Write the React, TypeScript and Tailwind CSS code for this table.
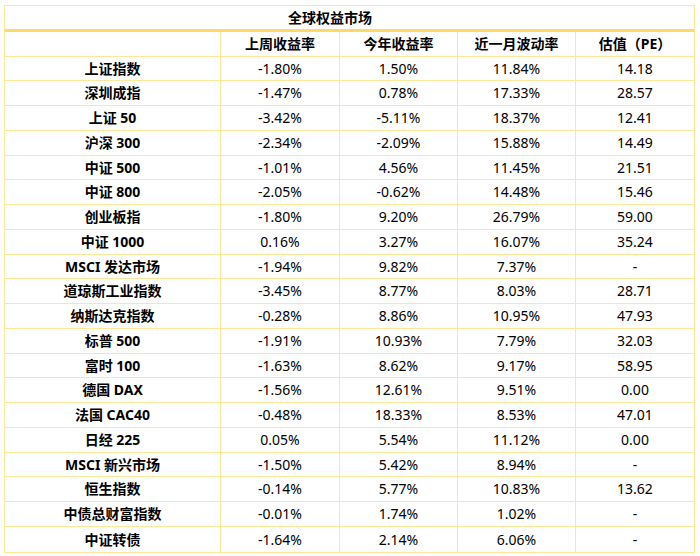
const headers = ["上周收益率", "今年收益率", "近一月波动率", "估值（PE）"];

const rows: [string, string, string, string, string][] = [
  ["上证指数", "-1.80%", "1.50%", "11.84%", "14.18"],
  ["深圳成指", "-1.47%", "0.78%", "17.33%", "28.57"],
  ["上证 50", "-3.42%", "-5.11%", "18.37%", "12.41"],
  ["沪深 300", "-2.34%", "-2.09%", "15.88%", "14.49"],
  ["中证 500", "-1.01%", "4.56%", "11.45%", "21.51"],
  ["中证 800", "-2.05%", "-0.62%", "14.48%", "15.46"],
  ["创业板指", "-1.80%", "9.20%", "26.79%", "59.00"],
  ["中证 1000", "0.16%", "3.27%", "16.07%", "35.24"],
  ["MSCI 发达市场", "-1.94%", "9.82%", "7.37%", "-"],
  ["道琼斯工业指数", "-3.45%", "8.77%", "8.03%", "28.71"],
  ["纳斯达克指数", "-0.28%", "8.86%", "10.95%", "47.93"],
  ["标普 500", "-1.91%", "10.93%", "7.79%", "32.03"],
  ["富时 100", "-1.63%", "8.62%", "9.17%", "58.95"],
  ["德国 DAX", "-1.56%", "12.61%", "9.51%", "0.00"],
  ["法国 CAC40", "-0.48%", "18.33%", "8.53%", "47.01"],
  ["日经 225", "0.05%", "5.54%", "11.12%", "0.00"],
  ["MSCI 新兴市场", "-1.50%", "5.42%", "8.94%", "-"],
  ["恒生指数", "-0.14%", "5.77%", "10.83%", "13.62"],
  ["中债总财富指数", "-0.01%", "1.74%", "1.02%", "-"],
  ["中证转债", "-1.64%", "2.14%", "6.06%", "-"],
];

const colWidths = ["w-[216px]", "w-[119px]", "w-[118px]", "w-[118px]", "w-[118px]"];

function Cell({ i, children, bold }: { i: number; children: React.ReactNode; bold?: boolean }) {
  return (
    <div
      className={`${colWidths[i]} shrink-0 flex items-center justify-center ${i < 4 ? "border-r border-[#FFE699]" : ""} ${bold ? "font-bold" : ""}`}
    >
      {children}
    </div>
  );
}

export default function App() {
  return (
    <div className="w-[700px] h-[556px] bg-white pt-[5px] pl-[4px] text-[14px] leading-none text-black [font-family:'Noto_Sans','Noto_Sans_CJK_SC',sans-serif]">
      <div className="w-[691px] border border-[#FFE699]">
        <div className="h-[26px] border-b-[3px] border-[#FFD966] flex items-center pl-[283px] font-bold">
          全球权益市场
        </div>
        <div className="h-[25px] flex border-b border-[#FFE699]">
          <Cell i={0}>{""}</Cell>
          {headers.map((h, j) => (
            <Cell key={h} i={j + 1} bold>
              {h}
            </Cell>
          ))}
        </div>
        {rows.map((r, idx) => (
          <div
            key={r[0]}
            className={`flex ${idx % 4 === 0 ? "h-[24px]" : "h-[25px]"} ${idx < rows.length - 1 ? "border-b border-[#FFE699]" : ""}`}
          >
            {r.map((v, j) => (
              <Cell key={j} i={j} bold={j === 0}>
                {v}
              </Cell>
            ))}
          </div>
        ))}
      </div>
    </div>
  );
}
